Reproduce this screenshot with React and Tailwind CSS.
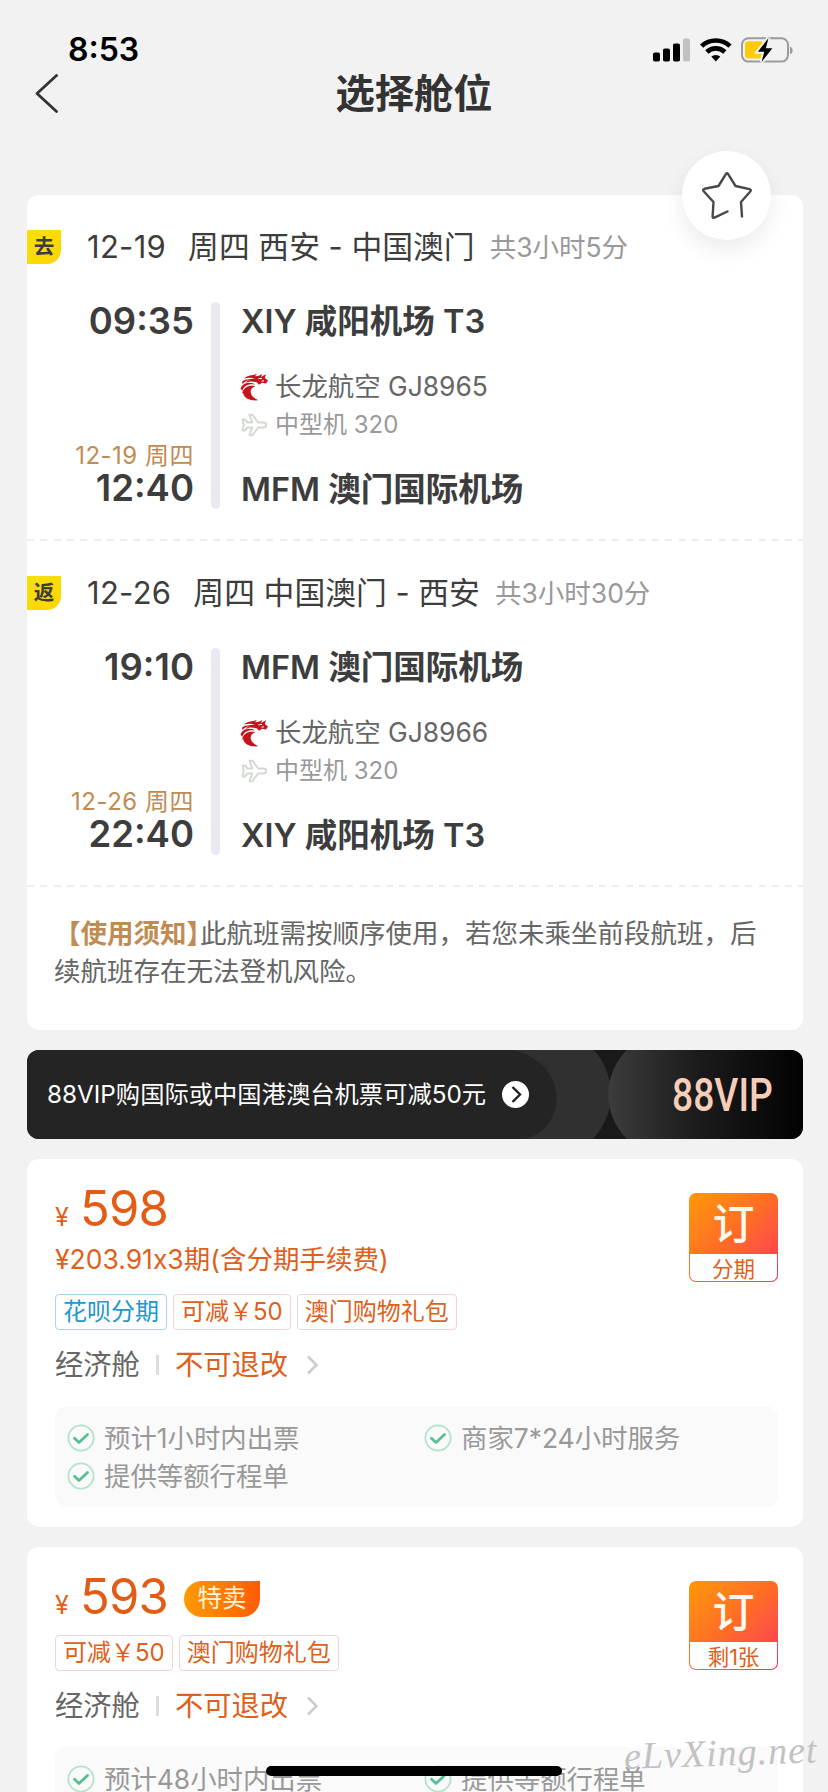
import clsx from 'clsx';

const LEGS = [
    {
        tag: '去', date: '12-19', route: '周四 西安 - 中国澳门', duration: '共3小时5分',
        depart: '09:35', from: 'XIY 咸阳机场 T3', flight: '长龙航空 GJ8965', plane: '中型机 320',
        arriveDay: '12-19 周四', arrive: '12:40', to: 'MFM 澳门国际机场',
    },
    {
        tag: '返', date: '12-26', route: '周四 中国澳门 - 西安', duration: '共3小时30分',
        depart: '19:10', from: 'MFM 澳门国际机场', flight: '长龙航空 GJ8966', plane: '中型机 320',
        arriveDay: '12-26 周四', arrive: '22:40', to: 'XIY 咸阳机场 T3',
    },
];

const FARES = [
    {
        price: '598',
        installment: '¥203.91x3期(含分期手续费)',
        tags: [{ text: '花呗分期', blue: true }, { text: '可减￥50' }, { text: '澳门购物礼包' }],
        note: '分期',
        services: ['预计1小时内出票', '商家7*24小时服务', '提供等额行程单'],
    },
    {
        price: '593',
        special: '特卖',
        tags: [{ text: '可减￥50' }, { text: '澳门购物礼包' }],
        note: '剩1张',
        services: ['预计48小时内出票', '提供等额行程单'],
    },
];

function StatusBar() {
    return (
        <div className="flex h-[74px] items-end justify-between pl-[68px] pr-[33px] pb-[8px]">
            <span className="text-[32px] leading-[32px] font-semibold text-black">8:53</span>
            <svg className="mb-[3px] h-[26px] w-[142px]" viewBox="0 0 142 26">
                <rect x="0" y="15.5" width="7" height="9" rx="1.8" />
                <rect x="10" y="11.5" width="7" height="13" rx="1.8" />
                <rect x="20" y="6.5" width="7" height="18" rx="1.8" />
                <rect x="30" y="1.5" width="7" height="23" rx="1.8" fill="#c1c1c1" />
                <g fill="none" stroke="#000" strokeWidth="4.6">
                    <path d="M48.6 9.2a20.5 20.5 0 0 1 28.4 0" />
                    <path d="M53.8 15a13 13 0 0 1 18 0" />
                </g>
                <path d="M58.3 19.6a6.8 6.8 0 0 1 9 0l-4.5 5z" />
                <rect x="89" y="1.2" width="46" height="23.4" rx="6.5" fill="none" stroke="#9b9b9b" strokeWidth="2" />
                <path d="M137 9.4c3.6 1.2 3.6 6.600 0 7.800z" fill="#9b9b9b" />
                <rect x="92" y="4.2" width="19" height="17.4" rx="3.5" fill="#fecb05" />
                <path d="M115.500 1l-10.600 13.800h6.300L108.600 25l10.800-13.800h-6.500z" stroke="#f2f2f2" strokeWidth="4" />
                <path d="M115.500 1l-10.600 13.800h6.300L108.600 25l10.800-13.800h-6.500z" />
            </svg>
        </div>
    );
}

function DragonLogo() {
    return (
        <svg className="-ml-[1px] h-[28px] w-[28px]" viewBox="0 0 28 28" fill="#c41420">
            {/* horns and mane */}
            <path d="M4 5.500C8 1.500 13 2.500 17 .8L15 3.200c3.500 0 5.500-1 7.500-2.200L20.800 4 26 1.200 24.800 5 28 7.500l-2 3-4-.7-3 1.900-2.200-2.500C12 8.200 8.500 8 5.500 10.200 9 6 12 5.500 15.500 5.600 11 4.200 7.500 4.500 4 5.500z" />
            <path d="M2 8.800C4.500 6.400 8 6 12 6.400 8 6.800 4.500 8.300 2.500 11z" />
            {/* body */}
            <path d="M.6 15.500C2 10.800 7.500 8.600 13 10.200l2 1.400C8.500 10.500 4 12.500 2.200 18z" />
            <path d="M1.800 21C3.600 14 9 11.800 15.500 13.200 9.500 14.800 7.500 22.500 18.500 27.300 10 28 3.800 25.500 3 19.500z" />
            <path d="M18.500 5.800l3.500-.4M21.500 8.200l2.500-.5" stroke="#fff" strokeWidth="1" fill="none" />
        </svg>
    );
}

function PlaneIcon() {
    return (
        <svg className="h-[24px] w-[27px]" viewBox="0 0 27 24" fill="none" stroke="#d3dacf" strokeWidth="2" strokeLinejoin="round">
            <path d="M1.500 6.500H4l2.500 3h4.700L8.500 1.800h3l5.600 7.700h5.600c3.200 0 3.200 5 0 5h-5.600l-5.600 7.700h-3l2.700-7.700H6.500l-2.500 3H1.500L2.800 12z" />
        </svg>
    );
}

function CheckIcon() {
    return (
        <svg className="h-[28px] w-[28px] shrink-0" viewBox="0 0 28 28" fill="none" strokeLinecap="round" strokeLinejoin="round">
            <circle cx="14" cy="14" r="12.600" stroke="#b3e3cb" strokeWidth="1.800" />
            <path d="M7.500 14.300l4.500 4.200 8.500-8" stroke="#57c091" strokeWidth="2.800" />
        </svg>
    );
}

function Leg({ leg }) {
    return (
        <section className="h-[346px] pt-[35px]">
            <div className="flex h-[34px] items-center text-[#3d3d3d]">
                <span className="flex h-[34px] w-[34px] items-center justify-center rounded-br-[14px] bg-gradient-to-br from-[#f5e10b] to-[#ffd400] text-[20.500px] font-semibold">{leg.tag}</span>
                <span className="ml-[26px] text-[31px] leading-[34px] tracking-[0.300px]">{leg.date}</span>
                <span className="ml-[22px] text-[30.800px] leading-[34px]">{leg.route}</span>
                <span className="ml-[15px] text-[26.500px] leading-[34px] text-[#999]">{leg.duration}</span>
            </div>
            <div className="mt-[38px] flex h-[207px]">
                <div className="flex w-[167px] flex-col text-right text-[36.500px] font-semibold text-[#3d3d3d]">
                    <span className="leading-[38px]">{leg.depart}</span>
                    <span className="mt-auto text-[24px] leading-[24px] font-normal tracking-[0.500px] text-[#bf8c55]">{leg.arriveDay}</span>
                    <span className="leading-[41px]">{leg.arrive}</span>
                </div>
                <div className="ml-[17px] w-[9px] rounded-full bg-[#e9eaef]" />
                <div className="ml-[21px] flex flex-col text-[32.500px] font-semibold text-[#3d3d3d]">
                    <span className="leading-[40px]">{leg.from}</span>
                    <div className="mt-[26px] flex h-[38px] items-center text-[26.400px] font-normal text-[#666]">
                        <DragonLogo />
                        <span className="ml-[7px]">{leg.flight}</span>
                    </div>
                    <div className="flex h-[38px] items-center text-[24px] font-normal text-[#999]">
                        <PlaneIcon />
                        <span className="ml-[7px]">{leg.plane}</span>
                    </div>
                    <span className="mt-auto leading-[38px]">{leg.to}</span>
                </div>
            </div>
            <div className="mt-[30px] h-[2px] bg-[repeating-linear-gradient(90deg,#ededed_0_7px,transparent_7px_13.300px)]" />
        </section>
    );
}

function VipBanner() {
    return (
        <div className="relative mt-[20px] flex h-[89px] items-center overflow-hidden rounded-xl bg-[#191919] pl-[20px] text-white">
            <svg className="absolute inset-0 h-full w-full" viewBox="0 0 776 89">
                <defs>
                    <linearGradient id="vip" x1="0" x2="1">
                        <stop offset="0" stopColor="#3c3c3c" />
                        <stop offset="0.45" stopColor="#1c1c1c" />
                        <stop offset="1" stopColor="#020202" />
                    </linearGradient>
                </defs>
                <circle cx="519" cy="44" r="65" fill="#303030" />
                <path d="M0 0H485C542 12 542 77 498 89H0z" fill="#242424" />
                <path d="M600 0C575 25 575 64 600 89H776V0z" fill="url(#vip)" />
            </svg>
            <span className="relative text-[24.300px]">88VIP购国际或中国港澳台机票可减50元</span>
            <svg className="relative ml-[16px] h-[27px] w-[27px]" viewBox="0 0 27 27">
                <circle cx="13.500" cy="13.500" r="13.500" fill="#fff" />
                <path d="M10.500 6l7.500 7.500-7.500 7.500" fill="none" stroke="#222" strokeWidth="2.400" />
            </svg>
            <span className="absolute top-[15px] left-[645px] origin-left scale-x-[0.81] font-[Roboto] text-[46px] leading-[60px] font-medium text-[#f6cdb9]">88VIP</span>
        </div>
    );
}

function Fare({ fare }) {
    return (
        <section className="relative mt-[20px] rounded-xl bg-white px-[28px] pt-[24px] pb-[20px] text-[#df5f1b] [font-feature-settings:'calt'_0]">
            <div className="flex h-[51px] items-center">
                <span className="w-[25px] pt-[18px] text-[25px] leading-[25px]">¥</span>
                <span className="text-[49px] leading-[51px] tracking-[-0.800px] text-[#e25c16]">{fare.price}</span>
                {fare.special && (
                    <span className="ml-[16px] mt-[4px] flex h-[36px] w-[76px] items-center justify-center rounded-l-full rounded-br-full bg-gradient-to-r from-[#ff9a00] to-[#ff5b05] text-[24.500px] text-[#fff3dc]">{fare.special}</span>
                )}
            </div>
            {fare.installment && <p className="mt-[6px] text-[26.500px] leading-[38px]">{fare.installment}</p>}
            <div className={clsx('flex gap-[6px]', fare.installment ? 'mt-[16px]' : 'mt-[13px]')}>
                {fare.tags.map(t => (
                    <span
                        key={t.text}
                        className={clsx(
                            'flex h-[36px] items-center rounded-[4px] border px-[7px] text-[24px]',
                            t.blue ? 'border-[#a5d8ea] text-[#2496cd]' : 'border-[#f3d2d4]'
                        )}
                    >
                        {t.text}
                    </span>
                ))}
            </div>
            <div className="mt-[16px] flex h-[38px] items-center text-[28.300px]">
                <span className="text-[#666]">经济舱</span>
                <span className="mx-[16px] h-[20px] w-[3px] bg-[#ddd]" />
                <span>不可退改</span>
                <svg className="ml-[18px] h-[20px] w-[13px]" viewBox="0 0 13 20" fill="none" stroke="#ccc" strokeWidth="2.500">
                    <path d="M2 1.500l8.500 8.500L2 18.500" />
                </svg>
            </div>
            <div className="mt-[22px] grid w-[723px] grid-cols-[357px_1fr] rounded-xl bg-[#fafafa] pt-[13px] pb-[12px] pl-[12px] text-[26.400px] text-[#999]">
                {fare.services.map(s => (
                    <div key={s} className="flex h-[38px] items-center gap-[9px] leading-[38px]">
                        <CheckIcon />
                        {s}
                    </div>
                ))}
            </div>
            <button className="absolute top-[34px] right-[25px] flex h-[89px] w-[89px] flex-col rounded-[7px] bg-gradient-to-br from-[#ff9800] via-[#ff6a25] to-[#fb2c58] p-px text-center">
                <span className="h-[60px] w-full text-[42px] leading-[59px] font-medium text-[#fffaf0]">订</span>
                <span className="h-[27px] w-full rounded-b-[6px] bg-white text-[21.500px] leading-[31px]">{fare.note}</span>
            </button>
        </section>
    );
}

export default function App() {
    return (
        <div className="relative h-[1792px] w-[828px] overflow-hidden bg-[#f2f2f2] font-[Inter,'Noto_Sans_CJK_SC',sans-serif]">
            <StatusBar />
            <header className="flex h-[121px] items-start">
                <svg className="ml-[34px] h-[39px] w-[26px]" viewBox="0 0 26 39" fill="none" stroke="#333" strokeWidth="2.800" strokeLinecap="round" strokeLinejoin="round">
                    <path d="M22.500 1.500L3 19.500l19.500 18" />
                </svg>
                <h1 className="mr-[60px] flex-1 text-center text-[39.300px] leading-[39px] font-semibold text-[#333]">选择舱位</h1>
            </header>

            <main className="pr-[25px] pl-[27px]">
                <div className="relative h-[835px] rounded-xl bg-white">
                    {LEGS.map(leg => <Leg key={leg.tag} leg={leg} />)}
                    <p className="px-[27px] pt-[27px] text-[26.500px] leading-[38px] whitespace-nowrap text-[#666]">
                        <span className="mr-[-13px] font-semibold text-[#bf8c55]">【使用须知】</span>
                        此航班需按顺序使用，若您未乘坐前段航班，后<br />续航班存在无法登机风险。
                    </p>
                    <button className="absolute top-[-44px] left-[655px] flex h-[89px] w-[89px] items-center justify-center rounded-full bg-white shadow-[0_10px_22px_rgba(0,0,0,0.08)]">
                        <svg className="h-[89px] w-[89px]" viewBox="0 0 89 89" fill="none" stroke="#484848" strokeWidth="2.400" strokeLinecap="round" strokeLinejoin="round">
                            <path d="M60 65.500L59 51l9.300-10.500c.9-1.200.6-2-.8-2.400L53.500 35 46 22.800c-.6-.9-1.400-.9-2 0L36.500 35l-14 2.800c-1.500.4-1.800 1.200-.8 2.400L31.500 51l-.9 14.500c0 1.200.6 1.600 1.800 1.200L45.500 60.500" />
                        </svg>
                    </button>
                </div>
                <VipBanner />
                {FARES.map(fare => <Fare key={fare.price} fare={fare} />)}
            </main>

            <div className="absolute bottom-[16px] left-[266px] h-[10px] w-[296px] rounded-full bg-black" />
            <span className="absolute top-[1736px] left-[624px] origin-left -rotate-2 font-['Liberation_Serif'] text-[38px] leading-[40px] tracking-[1px] text-[#c2c2c2] italic">eLvXing.net</span>
        </div>
    );
}
